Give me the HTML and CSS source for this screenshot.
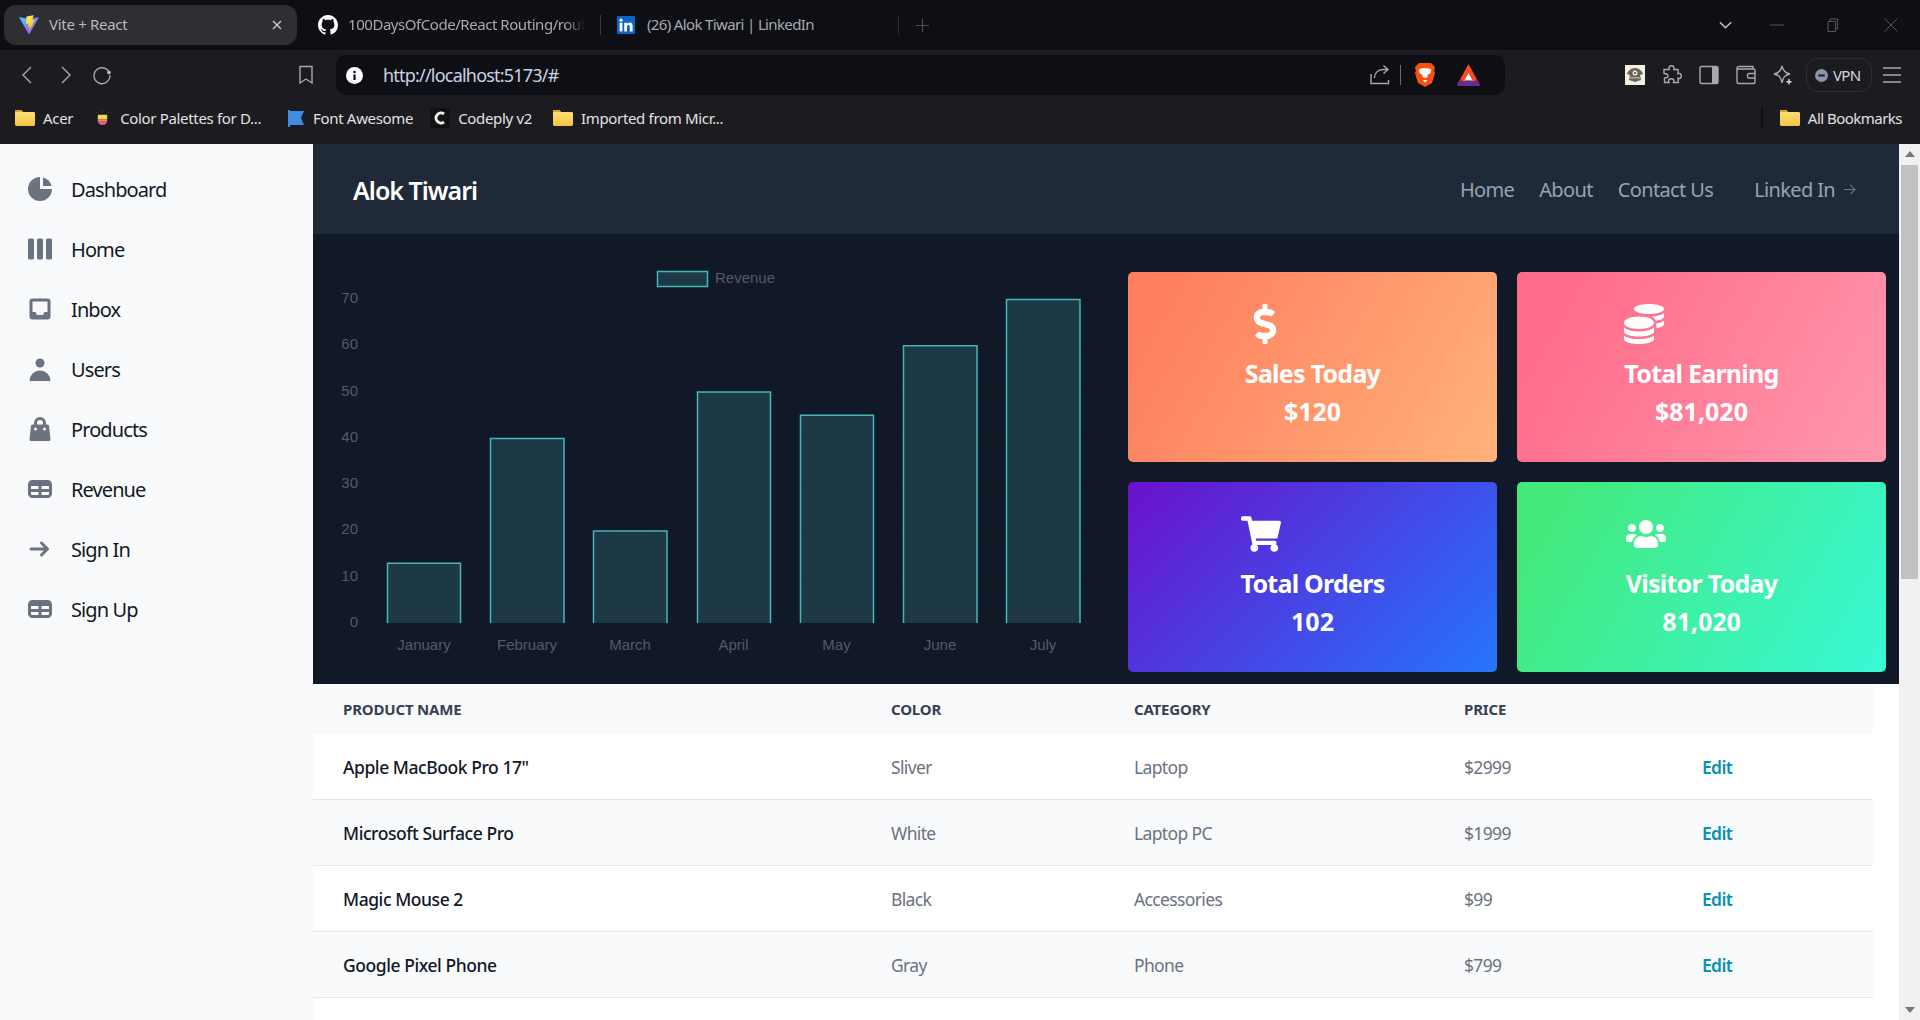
FILE: index.html
```html
<!DOCTYPE html>
<html lang="en">
<head>
<meta charset="utf-8">
<title>Vite + React</title>
<link rel="stylesheet" href="styles.css">
</head>
<body>
<svg class="defs" width="0" height="0" aria-hidden="true">
  <defs>
    <linearGradient id="folderFill" x1="0" y1="0" x2="0" y2="1"><stop offset="0" stop-color="#ffe27a"/><stop offset="1" stop-color="#f2c443"/></linearGradient>
    <linearGradient id="viteA" x1="0" y1="0" x2="1" y2="1"><stop offset="0" stop-color="#41d1ff"/><stop offset="1" stop-color="#bd34fe"/></linearGradient>
    <linearGradient id="viteB" x1="0" y1="0" x2="0.4" y2="1"><stop offset="0" stop-color="#ffea83"/><stop offset="0.5" stop-color="#ffdd35"/><stop offset="1" stop-color="#ffa800"/></linearGradient>
    <symbol id="folder" viewBox="0 0 20 20"><path d="M0 3.5C0 2.7.6 2 1.4 2h4.2c.5 0 .9.2 1.2.6L8 4h10.6c.8 0 1.4.6 1.4 1.4v11.2c0 .8-.6 1.4-1.4 1.4H1.4C.6 18 0 17.4 0 16.6z" fill="url(#folderFill)"/><path d="M0 3.5C0 2.7.6 2 1.4 2h4.2c.5 0 .9.2 1.2.6L8 4H0z" fill="#d9a52e"/></symbol>
    <symbol id="table-icon" viewBox="0 0 20 20"><path fill-rule="evenodd" clip-rule="evenodd" d="M5 4a3 3 0 00-3 3v6a3 3 0 003 3h10a3 3 0 003-3V7a3 3 0 00-3-3H5zm-1 9v-1h5v2H5a1 1 0 01-1-1zm7 1h4a1 1 0 001-1v-1h-5v2zm0-4h5V8h-5v2zM9 8H4v2h5V8z"/></symbol>
  </defs>
</svg>
<div class="window">
  <div class="tabstrip">
    <div class="tab tab-active">
      <svg class="tab-icon" viewBox="0 0 410 404"><path fill="url(#viteA)" d="M399.641 59.5246L215.643 388.545C211.844 395.338 202.084 395.378 198.228 388.618L10.5817 59.5563C6.38087 52.1896 12.6802 43.2665 21.0281 44.7586L205.223 77.6824C206.398 77.8924 207.601 77.8904 208.776 77.6763L389.119 44.8058C397.439 43.2894 403.768 52.1434 399.641 59.5246Z"/><path fill="url(#viteB)" d="M292.965 1.5744L156.801 28.2552C154.563 28.6937 152.906 30.5903 152.771 32.8664L144.395 174.33C144.198 177.662 147.258 180.248 150.51 179.498L188.42 170.749C191.967 169.931 195.172 173.055 194.443 176.622L183.18 231.775C182.422 235.487 185.907 238.661 189.532 237.56L212.947 230.446C216.577 229.344 220.065 232.527 219.297 236.242L201.398 322.875C200.278 328.294 207.486 331.249 210.492 326.603L212.5 323.5L323.454 102.072C325.312 98.3645 322.108 94.137 318.036 94.9228L279.014 102.454C275.347 103.161 272.227 99.746 273.262 96.1583L298.731 7.86689C299.767 4.27314 296.636 0.855181 292.965 1.5744Z"/></svg>
      <span class="tab-title">Vite + React</span>
      <svg class="tab-close" viewBox="0 0 10 10"><path d="M1 1l8 8M9 1L1 9"/></svg>
    </div>
    <div class="tab tab-github">
      <svg class="tab-icon" viewBox="0 0 16 16"><path fill="#fff" d="M8 0C3.58 0 0 3.58 0 8c0 3.54 2.29 6.53 5.47 7.59.4.07.55-.17.55-.38 0-.19-.01-.82-.01-1.49-2.01.37-2.53-.49-2.69-.94-.09-.23-.48-.94-.82-1.13-.28-.15-.68-.52-.01-.53.63-.01 1.08.58 1.23.82.72 1.21 1.87.87 2.33.66.07-.52.28-.87.51-1.07-1.78-.2-3.64-.89-3.64-3.95 0-.87.31-1.59.82-2.15-.08-.2-.36-1.02.08-2.12 0 0 .67-.21 2.2.82.64-.18 1.32-.27 2-.27.68 0 1.36.09 2 .27 1.53-1.04 2.2-.82 2.2-.82.44 1.1.16 1.92.08 2.12.51.56.82 1.27.82 2.15 0 3.07-1.87 3.75-3.65 3.95.29.25.54.73.54 1.48 0 1.07-.01 1.93-.01 2.2 0 .21.15.46.55.38A8.013 8.013 0 0016 8c0-4.42-3.58-8-8-8z"/></svg>
      <span class="tab-title tab-fade">100DaysOfCode/React Routing/rout</span>
    </div>
    <span class="tab-sep"></span>
    <div class="tab tab-linkedin">
      <svg class="tab-icon-in" viewBox="0 0 18 18"><rect width="18" height="18" rx="1.5" fill="#0a66c2"/><rect x="2.6" y="6.8" width="2.8" height="8.6" fill="#fff"/><circle cx="4" cy="4.2" r="1.6" fill="#fff"/><path fill="#fff" d="M7.2 6.8h2.7V8c.5-.8 1.4-1.4 2.7-1.4 2.5 0 3 1.6 3 3.8v5h-2.8v-4.4c0-1.1 0-2.1-1.3-2.1s-1.5 1-1.5 2v4.5H7.2z"/></svg>
      <span class="tab-title">(26) Alok Tiwari | LinkedIn</span>
    </div>
    <span class="tab-sep tab-sep-new"></span>
    <svg class="tab-plus" viewBox="0 0 14 14"><path d="M7 0v14M0 7h14"/></svg>
    <div class="win-controls">
      <svg class="win-chevron" viewBox="0 0 14 8"><path d="M1 1l6 6 6-6"/></svg>
      <svg class="win-min" viewBox="0 0 14 14"><path d="M0 7h14"/></svg>
      <svg class="win-restore" viewBox="0 0 14 14"><path d="M2 3.5h7.500v10H2zM4 3.500V1h7.500v10H9.500"/></svg>
      <svg class="win-close" viewBox="0 0 14 14"><path d="M.5.5l13 13M13.500.5l-13 13"/></svg>
    </div>
  </div>

  <div class="toolbar">
    <svg class="tool-icon" viewBox="0 0 20 20"><path d="M13 2L5 10l8 8"/></svg>
    <svg class="tool-icon" viewBox="0 0 20 20"><path d="M7 2l8 8-8 8"/></svg>
    <svg class="tool-icon" viewBox="0 0 20 20"><path d="M16.500 6A8 8 0 1 0 18 10"/><circle cx="17" cy="7.500" r="1.800" fill="#c8c8c8" stroke="none"/></svg>
    <svg class="tool-icon tool-bookmark" viewBox="0 0 20 20"><path d="M4 1.500h12V18l-6-4-6 4z"/></svg>
    <div class="address">
      <svg class="info-icon" viewBox="0 0 17 17"><circle cx="8.500" cy="8.500" r="8.500" fill="#fff"/><rect x="7.400" y="7.400" width="2.200" height="5.600" fill="#0e0f14"/><circle cx="8.500" cy="5" r="1.300" fill="#0e0f14"/></svg>
      <span class="url">http://localhost:5173/#</span>
      <svg class="tool-icon share-icon" viewBox="0 0 20 20"><path d="M1 9v9.500h17.500V15M4.500 13c0-5 3.500-8.500 8.500-8.500h5M13.500 .5L18 4.500l-4.500 4"/></svg>
      <span class="addr-sep"></span>
      <svg class="lion-icon" viewBox="0 0 20 24"><path fill="#f9500f" d="M4 0h12l2.500 2.500L20 4l-.8 4 .8 2-3 10-7 4-7-4-3-10 .8-2L0 4l1.500-1.500z"/><path fill="#fff" d="M3.500 6.500L7 5.200h6l3.500 1.300-1.200 4-3 1.300.5 1.200-1 1.500L10 15l-1.800-.500-1-1.500.5-1.200-3-1.300zM7.500 17h5L10 19.500z"/></svg>
      <svg class="bat-icon" viewBox="0 0 23 22"><path fill="#ff4724" d="M11.500 0L23 21 11.500 15 0 21z"/><path fill="#9e1f63" d="M0 21l4-7 1 5h13l1-5 4 7z"/><path fill="#662d91" d="M0 22l3-5h17l3 5z"/><path fill="#fff" d="M11.500 9l4 7.500h-8z"/></svg>
    </div>
    <div class="ext-icons">
      <svg class="ext-icon" viewBox="0 0 20 20"><rect width="20" height="20" fill="#f3eee2"/><path fill="#6b6259" d="M10 3c4 0 7 3 8 6l-3 1 1 5-6 2-6-2 1-5-3-1c1-3 4-6 8-6z"/><circle cx="10" cy="8" r="2.500" fill="#f3eee2"/><circle cx="10" cy="8" r="1" fill="#3c3530"/><rect x="5" y="12" width="10" height="1.500" fill="#b7a990"/></svg>
      <svg class="tool-icon" viewBox="0 0 20 20"><path d="M7 3c0-3 5-3 5 0 0 .8-.2 1.500-.2 1.500H16v4.200s.6-.4 1.200-.2c2.800 0 2.800 5 0 5-.6 0-1.200-.4-1.200-.4l.400 4.400H11.500s.5-.7.5-1.500c0-3-5.500-3-5.500 0 0 .8.500 1.500.500 1.500H2.500v-4.500c2.500 0 3.500-1 3.500-2.300S4.500 8.500 2 8.500V4.500h5.300S7 3.800 7 3z"/></svg>
      <svg class="tool-icon" viewBox="0 0 20 20"><rect x="1" y="1.500" width="18" height="17" rx="1.500"/><rect x="13" y="1.500" width="6" height="17" fill="#a9a9a9" stroke="none"/></svg>
      <svg class="tool-icon" viewBox="0 0 20 20"><path d="M17 4V1.500H3A2 2 0 0 0 1 3.500V17a1.500 1.500 0 0 0 1.500 1.500h15A1.500 1.500 0 0 0 19 17V5.500A1.500 1.500 0 0 0 17.500 4H1.500M19 8.500h-6a1.500 1.500 0 0 0-1.500 1.500v1.500A1.500 1.500 0 0 0 13 13h6"/></svg>
      <svg class="tool-icon" viewBox="0 0 20 20"><path d="M9 1c1 5 3 7 8 8-5 1-7 3-8 9-1-6-3-8-8-9 5-1 7-3 8-8z"/><path d="M16 14v5.500M13.500 16.700h5" stroke="#e0e0e0"/></svg>
      <div class="vpn">
        <svg class="vpn-dot" viewBox="0 0 13 13"><circle cx="6.500" cy="6.500" r="6.500" fill="#8d92ad"/><rect x="3.200" y="5.500" width="6.600" height="2" fill="#1b1b20"/></svg>
        <span>VPN</span>
      </div>
      <svg class="tool-icon menu-icon" viewBox="0 0 20 20"><path d="M1 3h18M1 10h18M1 17h18"/></svg>
    </div>
  </div>

  <div class="bookmarks">
    <div class="bm bm-acer"><svg class="bm-icon"><use href="#folder"/></svg><span>Acer</span></div>
    <div class="bm bm-palette">
      <svg class="bm-icon-pal" viewBox="0 0 16 20"><path d="M0 3l3 1M16 3l-3 1M6 0l1 3M10 0L9 3" stroke="#333" fill="none"/><path fill="#1b1b20" d="M1 4h14v10a7 6 0 0 1-14 0z"/><path fill="#f4d547" d="M3 6h10v5H3z"/><path fill="#f58a7c" d="M3 11h10v2H3z"/><path fill="#e7607f" d="M3 13h10c0 2-2 4-5 4s-5-2-5-4z"/></svg>
      <span>Color Palettes for D...</span>
    </div>
    <div class="bm bm-fa"><svg class="bm-icon-flag" viewBox="0 0 16 20"><path fill="#3f8ce0" d="M0 2h2v1h14l-3 7 3 7H2v2H0z"/></svg><span>Font Awesome</span></div>
    <div class="bm bm-codeply"><svg class="bm-icon" viewBox="0 0 20 20"><rect width="20" height="20" fill="#111"/><path d="M14 6a5 5 0 1 0 0 8" fill="none" stroke="#eee" stroke-width="3"/></svg><span>Codeply v2</span></div>
    <div class="bm bm-imported"><svg class="bm-icon"><use href="#folder"/></svg><span>Imported from Micr...</span></div>
    <span class="bm-divider"></span>
    <div class="bm bm-all"><svg class="bm-icon"><use href="#folder"/></svg><span>All Bookmarks</span></div>
  </div>

  <div class="page">
    <aside class="sidebar">
      <a class="side-link"><svg class="side-icon" viewBox="0 0 20 20"><path d="M2 10a8 8 0 018-8v8h8a8 8 0 11-16 0z"/><path d="M12 2.252A8.014 8.014 0 0117.748 8H12V2.252z"/></svg>Dashboard</a>
      <a class="side-link"><svg class="side-icon" viewBox="0 0 20 20"><path d="M2 4a1 1 0 011-1h2a1 1 0 011 1v12a1 1 0 01-1 1H3a1 1 0 01-1-1V4zM8 4a1 1 0 011-1h2a1 1 0 011 1v12a1 1 0 01-1 1H9a1 1 0 01-1-1V4zM15 3a1 1 0 00-1 1v12a1 1 0 001 1h2a1 1 0 001-1V4a1 1 0 00-1-1h-2z"/></svg>Home</a>
      <a class="side-link"><svg class="side-icon" viewBox="0 0 20 20"><path fill-rule="evenodd" clip-rule="evenodd" d="M5 3a2 2 0 00-2 2v10a2 2 0 002 2h10a2 2 0 002-2V5a2 2 0 00-2-2H5zm0 2h10v7h-2l-1 2H8l-1-2H5V5z"/></svg>Inbox</a>
      <a class="side-link"><svg class="side-icon" viewBox="0 0 20 20"><path fill-rule="evenodd" clip-rule="evenodd" d="M10 9a3 3 0 100-6 3 3 0 000 6zm-7 9a7 7 0 1114 0H3z"/></svg>Users</a>
      <a class="side-link"><svg class="side-icon" viewBox="0 0 20 20"><path fill-rule="evenodd" clip-rule="evenodd" d="M10 2a4 4 0 00-4 4v1H5a1 1 0 00-.994.89l-1 9A1 1 0 004 18h12a1 1 0 00.994-1.11l-1-9A1 1 0 0015 7h-1V6a4 4 0 00-4-4zm2 5V6a2 2 0 10-4 0v1h4zm-6 3a1 1 0 112 0 1 1 0 01-2 0zm7-1a1 1 0 100 2 1 1 0 000-2z"/></svg>Products</a>
      <a class="side-link"><svg class="side-icon"><use href="#table-icon"/></svg>Revenue</a>
      <a class="side-link"><svg class="side-icon" viewBox="0 0 20 20"><path d="M10.293 5.293a1 1 0 011.414 0l4 4a1 1 0 010 1.414l-4 4a1 1 0 01-1.414-1.414L12.586 11H4a1 1 0 110-2h8.586l-2.293-2.293a1 1 0 010-1.414z"/></svg>Sign In</a>
      <a class="side-link"><svg class="side-icon"><use href="#table-icon"/></svg>Sign Up</a>
    </aside>

    <main class="content">
      <header class="topbar">
        <span class="brand">Alok Tiwari</span>
        <nav class="topnav">
          <a>Home</a>
          <a>About</a>
          <a>Contact Us</a>
          <a class="topnav-cta">Linked In <svg class="cta-arrow" viewBox="0 0 14 14"><path d="M1 7h12M8 2l5 5-5 5"/></svg></a>
        </nav>
      </header>

      <section class="dash">
        <svg class="chart" viewBox="0 0 815 450" width="815" height="450">
          <g class="grid">
            <path d="M52 65.500H783M52 111.500H783M52 157.500H783M52 204.500H783M52 250.500H783M52 296.500H783M52 342.500H783"/>
            <path d="M60.500 65V398M163.500 65V398M266.500 65V398M369.500 65V398M472.500 65V398M576.500 65V398M679.500 65V398M782.500 65V398"/>
            <path class="grid-zero" d="M52 389H783"/>
          </g>
          <g class="bar">
            <rect class="legend-box" x="344.500" y="37.500" width="50" height="15"/>
            <path d="M74.500 389V329.300H147.500V389"/>
            <path d="M177.500 389V204.400H251V389"/>
            <path d="M280.500 389V296.900H354V389"/>
            <path d="M384.500 389V158.100H457.500V389"/>
            <path d="M487.500 389V181.200H560.500V389"/>
            <path d="M590.500 389V111.800H664V389"/>
            <path d="M693.500 389V65.500H767V389"/>
          </g>
          <g class="labels">
            <text class="legend-text" x="402" y="49">Revenue</text>
            <g class="y-labels">
              <text x="45" y="69">70</text><text x="45" y="115.300">60</text><text x="45" y="161.600">50</text><text x="45" y="207.900">40</text><text x="45" y="254.100">30</text><text x="45" y="300.400">20</text><text x="45" y="346.700">10</text><text x="45" y="393">0</text>
            </g>
            <g class="x-labels">
              <text x="111" y="416">January</text><text x="214" y="416">February</text><text x="317" y="416">March</text><text x="420.500" y="416">April</text><text x="523.500" y="416">May</text><text x="627" y="416">June</text><text x="730" y="416">July</text>
            </g>
          </g>
        </svg>

        <div class="cards">
          <div class="card card-sales"><div class="card-body">
            <svg class="card-icon" viewBox="-112 0 512 512"><path d="M209.200 233.400l-108-31.600C88.700 198.200 80 186.500 80 173.500c0-16.300 13.200-29.500 29.500-29.500h66.300c12.200 0 24.200 3.700 34.200 10.500 6.100 4.100 14.300 3.100 19.500-2l34.800-34c7.100-6.900 6.100-18.400-1.800-24.500C238 74.800 207.400 64.100 176 64V16c0-8.800-7.200-16-16-16h-32c-8.800 0-16 7.200-16 16v48h-2.500C45.800 64-5.400 118.700.5 183.600c4.200 46.100 39.400 83.600 83.800 96.600l102.500 30c12.500 3.700 21.200 15.300 21.200 28.300 0 16.300-13.200 29.500-29.500 29.500h-66.300C100 368 88 364.300 78 357.500c-6.100-4.100-14.300-3.100-19.500 2l-34.800 34c-7.100 6.900-6.100 18.400 1.800 24.500 24.500 19.200 55.100 29.900 86.500 30v48c0 8.800 7.200 16 16 16h32c8.800 0 16-7.200 16-16v-48.200c46.600-.9 90.300-28.600 105.700-72.700 21.500-61.600-14.600-124.800-72.500-141.700z"/></svg>
            <div class="card-title">Sales Today</div><div class="card-value">$120</div>
          </div></div>
          <div class="card card-earning"><div class="card-body">
            <svg class="card-icon" viewBox="0 0 512 512"><path d="M0 405.300V448c0 35.300 86 64 192 64s192-28.700 192-64v-42.700C342.700 434.400 267.200 448 192 448S41.300 434.400 0 405.300zM320 128c106 0 192-28.700 192-64S426 0 320 0 128 28.700 128 64s86 64 192 64zM0 300.400V352c0 35.300 86 64 192 64s192-28.700 192-64v-51.600c-41.300 34-116.900 51.600-192 51.600S41.300 334.400 0 300.400zm416 11c57.300-11.100 96-31.700 96-55.400v-42.700c-23.200 16.400-57.300 27.600-96 34.500v63.600zM192 160C86 160 0 195.800 0 240s86 80 192 80 192-35.800 192-80-86-80-192-80zm219.300 56.300c60-10.800 100.700-32 100.700-56.300v-42.700c-35.500 25.100-96.500 38.600-160.700 41.800 29.500 14.300 51.200 33.500 60 57.200z"/></svg>
            <div class="card-title">Total Earning</div><div class="card-value">$81,020</div>
          </div></div>
          <div class="card card-orders"><div class="card-body">
            <svg class="card-icon" viewBox="0 -32 576 576"><path d="M528.120 301.319l47.273-208C578.806 78.301 567.391 64 551.990 64H159.208l-9.166-44.810C147.758 8.021 137.930 0 126.529 0H24C10.745 0 0 10.745 0 24v16c0 13.255 10.745 24 24 24h69.883l70.248 343.435C147.325 417.100 136 435.222 136 456c0 30.928 25.072 56 56 56s56-25.072 56-56c0-15.674-6.447-29.835-16.824-40h209.647C430.447 426.165 424 440.326 424 456c0 30.928 25.072 56 56 56s56-25.072 56-56c0-22.172-12.888-41.332-31.579-50.405l5.517-24.276c3.413-15.018-8.002-29.319-23.403-29.319H218.117l-6.545-32h293.145c11.206 0 20.920-7.754 23.403-18.681z"/></svg>
            <div class="card-title">Total Orders</div><div class="card-value">102</div>
          </div></div>
          <div class="card card-visitor"><div class="card-body">
            <svg class="card-icon" viewBox="0 -64 640 640"><path d="M96 224c35.300 0 64-28.700 64-64s-28.700-64-64-64-64 28.700-64 64 28.700 64 64 64zm448 0c35.300 0 64-28.700 64-64s-28.700-64-64-64-64 28.700-64 64 28.700 64 64 64zm32 32h-64c-17.600 0-33.500 7.100-45.100 18.600 40.300 22.100 68.900 62 75.100 109.400h66c17.700 0 32-14.300 32-32v-32c0-35.300-28.700-64-64-64zm-256 0c61.900 0 112-50.100 112-112S381.900 32 320 32 208 82.100 208 144s50.100 112 112 112zm76.800 32h-8.300c-20.800 10-43.900 16-68.500 16s-47.600-6-68.500-16h-8.300C179.600 288 128 339.600 128 403.200V432c0 26.500 21.500 48 48 48h288c26.500 0 48-21.500 48-48v-28.800c0-63.600-51.600-115.200-115.200-115.200zm-223.700-13.400C161.500 263.100 145.600 256 128 256H64c-35.300 0-64 28.700-64 64v32c0 17.700 14.300 32 32 32h65.900c6.300-47.400 34.900-87.300 75.200-109.400z"/></svg>
            <div class="card-title">Visitor Today</div><div class="card-value">81,020</div>
          </div></div>
        </div>
      </section>

      <table class="products">
        <colgroup><col class="col-name"><col class="col-color"><col class="col-cat"><col class="col-price"><col class="col-edit"></colgroup>
        <thead><tr><th>Product name</th><th>Color</th><th>Category</th><th>Price</th><th></th></tr></thead>
        <tbody>
          <tr><td class="name">Apple MacBook Pro 17"</td><td>Sliver</td><td>Laptop</td><td>$2999</td><td><a class="edit">Edit</a></td></tr>
          <tr><td class="name">Microsoft Surface Pro</td><td>White</td><td>Laptop PC</td><td>$1999</td><td><a class="edit">Edit</a></td></tr>
          <tr><td class="name">Magic Mouse 2</td><td>Black</td><td>Accessories</td><td>$99</td><td><a class="edit">Edit</a></td></tr>
          <tr><td class="name">Google Pixel Phone</td><td>Gray</td><td>Phone</td><td>$799</td><td><a class="edit">Edit</a></td></tr>
        </tbody>
      </table>
    </main>

    <div class="scrollbar">
      <svg class="sb-arrow" viewBox="0 0 10 6"><path d="M5 0l5 6H0z"/></svg>
      <div class="sb-track"><div class="sb-thumb"></div></div>
      <svg class="sb-arrow" viewBox="0 0 10 6"><path d="M0 0h10L5 6z"/></svg>
    </div>
  </div>
</div>
</body>
</html>
```

FILE: styles.css
```css
* { box-sizing: border-box; }
html, body { margin: 0; height: 100%; overflow: hidden; }
body { font-family: "Noto Sans", "Open Sans", sans-serif; letter-spacing: -0.04em; background: #fff; color: #111827; }
.defs { position: absolute; }
.window { display: flex; flex-direction: column; height: 1020px; width: 1920px; }

/* browser chrome */
.tabstrip { display: flex; align-items: center; height: 50px; flex: none; background: #0e0f14; padding-left: 4px; font-size: 15px; color: #a9a9ad; }
.tab { display: flex; align-items: center; height: 40px; }
.tab-active { width: 293px; background: #2e2e33; border-radius: 12px; padding: 0 15px; color: #b9b9bc; letter-spacing: -0.02em; }
.tab-icon { width: 20px; height: 20px; flex: none; }
.tab-title { margin-left: 10px; padding-bottom: 2px; white-space: nowrap; }
.tab-close { width: 10px; height: 10px; margin-left: auto; fill: none; stroke: #ccc; stroke-width: 1.4; }
.tab-github { width: 303px; padding-left: 21px; }
.tab-fade { width: 237px; letter-spacing: -0.03em; overflow: hidden; -webkit-mask-image: linear-gradient(90deg, #000 92%, transparent); mask-image: linear-gradient(90deg, #000 92%, transparent); }
.tab-sep { width: 1px; height: 20px; background: #3a3a40; flex: none; }
.tab-linkedin { width: 297px; padding-left: 16px; }
.tab-icon-in { width: 18px; height: 18px; flex: none; }
.tab-linkedin .tab-title { margin-left: 12px; }
.tab-sep-new { background: #2b2b30; }
.tab-plus { width: 13px; height: 13px; margin-left: 17px; fill: none; stroke: #4a4a4f; stroke-width: 1.3; }
.win-controls { display: flex; align-items: center; margin-left: auto; }
.win-chevron { width: 13px; height: 8px; margin-right: 38px; fill: none; stroke: #c4c4c4; stroke-width: 1.6; }
.win-min { width: 14px; height: 14px; margin-right: 42px; fill: none; stroke: #55555a; }
.win-restore { width: 14px; height: 14px; margin-right: 44px; fill: none; stroke: #55555a; }
.win-close { width: 14px; height: 14px; margin-right: 22px; fill: none; stroke: #55555a; }

.toolbar { display: flex; align-items: center; height: 50px; flex: none; background: #1b1b20; padding-left: 18px; }
.tool-icon { width: 20px; height: 20px; flex: none; margin-right: 17px; fill: none; stroke: #a9a9a9; stroke-width: 1.400; }
.tool-bookmark { margin-left: 167px; margin-right: 20px; }
.address { display: flex; align-items: center; width: 1169px; height: 40px; background: #0e0f14; border-radius: 10px; padding-left: 10px; }
.info-icon { width: 17px; height: 17px; flex: none; }
.url { margin-left: 20px; font-size: 18px; letter-spacing: -0.044em; color: #c9d3e6; flex: 1; }
.share-icon { margin-right: 10px; }
.addr-sep { width: 1px; height: 20px; background: #6a6a6f; margin-right: 14px; }
.lion-icon { width: 20px; height: 24px; flex: none; margin-right: 22px; }
.bat-icon { width: 23px; height: 22px; flex: none; margin-right: 25px; }
.ext-icons { display: flex; align-items: center; margin-left: 120px; }
.ext-icon { width: 20px; height: 20px; margin-right: 17px; flex: none; }
.vpn { display: flex; align-items: center; gap: 5px; width: 66px; height: 34px; margin: 0 10px 0 -4px; padding-left: 8px; border: 1px solid #2e2e34; border-radius: 12px; font-size: 15px; color: #d8d8dc; }
.vpn-dot { width: 13px; height: 13px; flex: none; }
.menu-icon { margin-right: 0; }

.bookmarks { display: flex; align-items: center; height: 44px; flex: none; background: #1b1b20; padding: 0 0 8px 15px; font-size: 15px; letter-spacing: -0.022em; color: #e2e2e4; }
.bm { display: flex; align-items: center; white-space: nowrap; }
.bm-icon { width: 20px; height: 20px; flex: none; margin-right: 8px; }
.bm-icon-pal { width: 15px; height: 19px; margin-right: 10px; flex: none; }
.bm-icon-flag { width: 16px; height: 20px; margin-right: 9px; flex: none; }
.bm-palette { margin-left: 22px; }
.bm-fa { margin-left: 27px; }
.bm-codeply { margin-left: 17px; }
.bm-imported { margin-left: 21px; }
.bm-divider { width: 2px; height: 20px; background: #0e0f14; margin-left: auto; margin-right: 17px; }
.bm-all { margin-right: 18px; letter-spacing: -0.035em; }

/* page */
.page { display: flex; flex: 1; min-height: 0; }
.sidebar { width: 313px; flex: none; background: #f9fafb; padding-top: 16px; display: flex; flex-direction: column; }
.side-link { display: flex; align-items: center; height: 60px; padding: 0 0 2px 25px; font-size: 20px; letter-spacing: -0.045em; color: #111827; }
.side-icon { width: 30px; height: 30px; fill: #6b7280; margin-right: 16px; flex: none; }

.content { flex: 1; min-width: 0; background: #fff; }
.topbar { display: flex; align-items: center; justify-content: space-between; height: 90px; background: #1f2937; padding: 0 43px 0 40px; }
.brand { margin-top: 2px; font-size: 25px; font-weight: 600; letter-spacing: -0.04em; color: #fff; }
.topnav { display: flex; align-items: center; gap: 25px; font-size: 20px; color: #94a3b8; }
.topnav-cta { margin-left: 16px; display: flex; align-items: center; gap: 8px; }
.cta-arrow { width: 13px; height: 13px; fill: none; stroke: #6b7a8f; stroke-width: 1.100; }

.dash { display: flex; height: 450px; background: #111827; }
.chart { flex: none; }
.grid path { fill: none; stroke: #0f1623; stroke-width: 1; }
.grid .grid-zero { stroke: #0c1b24; }
.bar path, .legend-box { fill: rgba(75, 192, 192, 0.2); stroke: #41b8bb; stroke-width: 1.500; }
.labels text { font-family: "Liberation Sans", sans-serif; font-size: 15px; letter-spacing: 0; fill: #555b63; }
.y-labels text { text-anchor: end; }
.x-labels text { text-anchor: middle; }

.cards { display: grid; grid-template-columns: 369px 369px; grid-template-rows: 190px 190px; gap: 20px; padding-top: 38px; align-content: start; }
.card { display: flex; justify-content: center; padding-top: 32px; border-radius: 5px; color: #fff; }
.card-body { text-align: center; }
.card-icon { display: block; width: 40px; height: 40px; fill: #fff; }
.card-title, .card-value { font-size: 25px; font-weight: 700; line-height: 38px; white-space: nowrap; }
.card-title { margin-top: 10px; letter-spacing: -0.03em; }
.card-value { letter-spacing: 0; }
.card-sales { background: linear-gradient(120deg, #ff7f5f 10%, #ffb27a 100%); }
.card-earning { background: linear-gradient(120deg, #ff6b88 10%, #ff97ae 100%); }
.card-orders { background: linear-gradient(135deg, #6a11cb 0%, #2575fc 100%); }
.card-visitor { background: linear-gradient(120deg, #43e97b 10%, #38f9d7 100%); }

.products { table-layout: fixed; width: 1560px; border-collapse: collapse; font-size: 17.500px; color: #6b7280; }
.col-name { width: 578px; }
.col-color { width: 243px; }
.col-cat { width: 330px; }
.col-price { width: 238px; }
.col-edit { width: 171px; }
.products th { height: 50px; padding: 0; text-align: left; background: #f9fafb; font-size: 15px; font-weight: 700; letter-spacing: -0.012em; text-transform: uppercase; color: #374151; }
.products td { height: 66px; padding: 1px 0 0; border-bottom: 1px solid #e5e7eb; font-weight: 400; }
.products tbody tr:first-child td { height: 65px; padding-top: 2px; }
.products th:first-child, .products td:first-child { padding-left: 30px; }
.products tbody tr:nth-child(even) { background: #f9fafb; }
.products .name { font-weight: 500; letter-spacing: -0.025em; color: #111827; }
.edit { font-weight: 600; color: #0891b2; }

.scrollbar { width: 21px; flex: none; display: flex; flex-direction: column; align-items: center; background: #f1f1f1; }
.sb-arrow { width: 10px; height: 6px; flex: none; margin: 7px 0; fill: #777; }
.sb-track { flex: 1; width: 100%; padding: 1px 2px 0; }
.sb-thumb { height: 414px; background: #c1c1c1; }
```
